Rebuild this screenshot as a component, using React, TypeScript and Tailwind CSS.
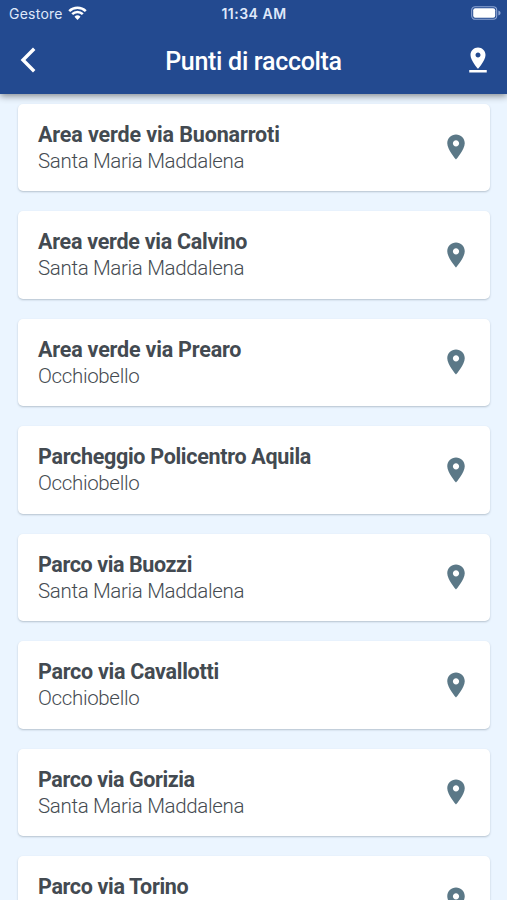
type Place = { name: string; town?: string; nameTracking: string };

const places: Place[] = [
  { name: "Area verde via Buonarroti", town: "Santa Maria Maddalena", nameTracking: "tracking-[-0.13px]" },
  { name: "Area verde via Calvino", town: "Santa Maria Maddalena", nameTracking: "tracking-[-0.27px]" },
  { name: "Area verde via Prearo", town: "Occhiobello", nameTracking: "tracking-[-0.2px]" },
  { name: "Parcheggio Policentro Aquila", town: "Occhiobello", nameTracking: "tracking-[-0.3px]" },
  { name: "Parco via Buozzi", town: "Santa Maria Maddalena", nameTracking: "tracking-[-0.4px]" },
  { name: "Parco via Cavallotti", town: "Occhiobello", nameTracking: "tracking-[-0.28px]" },
  { name: "Parco via Gorizia", town: "Santa Maria Maddalena", nameTracking: "tracking-[-0.4px]" },
  { name: "Parco via Torino", nameTracking: "tracking-[-0.35px]" },
];

function StatusBar() {
  return (
    <div className="grid h-7 grid-cols-3 items-center pl-[9px] pr-[6px] font-['Inter','Liberation_Sans',sans-serif] text-[14px] leading-none text-[#dfe8fa]">
      <div className="flex items-center gap-[5px]">
        <span className="tracking-[0.25px]">Gestore</span>
        <svg width="19" height="14" viewBox="0 0 19 14" className="-mt-[2px]" fill="none" stroke="white" strokeWidth="2.5">
          <path d="M1.2 5.1a11.8 11.8 0 0 1 16.6 0" />
          <path d="M4.2 8.2a7.5 7.5 0 0 1 10.6 0" />
          <path d="M9.5 14 6.5 10.8a4.3 4.3 0 0 1 6 0Z" fill="white" stroke="none" />
        </svg>
      </div>
      <span className="-ml-[2px] text-center text-[14px] font-semibold tracking-[0.5px]">11:34 AM</span>
      <svg width="30" height="14" viewBox="0 0 30 14" className="-mt-[2px] justify-self-end">
        <rect x="0.7" y="0.7" width="25" height="12.6" rx="3.5" fill="none" stroke="#8fa6d3" strokeWidth="1.1" />
        <rect x="2.2" y="2.2" width="22" height="9.6" rx="2" fill="white" />
        <path d="M27.4 4.6q2.2.8 2.2 2.4t-2.2 2.4Z" fill="#8fa6d3" />
      </svg>
    </div>
  );
}

function Header() {
  return (
    <header className="relative z-10 h-[94px] shrink-0 bg-[#234a90] shadow-[0_2px_7px_rgba(0,0,0,0.45)]">
      <StatusBar />
      <div className="grid h-[66px] grid-cols-[60px_1fr_60px] items-center">
        <svg width="16" height="26" viewBox="0 0 16 26" className="-mt-[3px] ml-[20px]" fill="none" stroke="white" strokeWidth="3.4">
          <path d="M14.2 1.7 3 13l11.2 11.3" />
        </svg>
        <h1 className="pt-[1px] text-center text-[25px] leading-8 font-medium tracking-[-0.3px] text-white">Punti di raccolta</h1>
        <svg width="30" height="30" viewBox="0 0 24 24" className="-mt-[3px] ml-[16px]" fill="white">
          <path d="M18 8c0-3.31-2.69-6-6-6S6 4.69 6 8c0 4.5 6 11 6 11s6-6.5 6-11zm-8 0c0-1.1.9-2 2-2s2 .9 2 2-.89 2-2 2c-1.1 0-2-.9-2-2zM5 20v2h14v-2H5z" />
        </svg>
      </div>
    </header>
  );
}

function PlaceCard({ name, town, nameTracking }: Place) {
  return (
    <li className="flex h-[87.5px] shrink-0 items-center justify-between rounded-[5px] bg-white pr-[19.5px] pl-5 shadow-[0_1px_2px_rgba(40,60,80,0.28)]">
      <div className="h-[51px]">
        <div className={`text-[21.5px] leading-[26px] font-bold whitespace-nowrap text-[#434a51] ${nameTracking}`}>{name}</div>
        {town && <div className="text-[20.5px] leading-[26px] font-light tracking-[-0.34px] text-[#454b51]">{town}</div>}
      </div>
      <svg width="30" height="30" viewBox="0 0 24 24" fill="#5b7887">
        <path d="M12 2C8.13 2 5 5.13 5 9c0 5.25 7 13 7 13s7-7.75 7-13c0-3.87-3.13-7-7-7zm0 9.5c-1.38 0-2.5-1.12-2.5-2.5s1.12-2.5 2.5-2.5 2.5 1.12 2.5 2.5-1.12 2.5-2.5 2.5z" />
      </svg>
    </li>
  );
}

export default function App() {
  return (
    <div className="flex h-[900px] w-[507px] flex-col overflow-hidden bg-[#ebf5ff] font-['Roboto','Open_Sans',sans-serif]">
      <Header />
      <ul className="flex flex-col gap-5 pt-[9.5px] pr-[17px] pl-[18px]">
        {places.map((place) => (
          <PlaceCard key={place.name} {...place} />
        ))}
      </ul>
    </div>
  );
}
